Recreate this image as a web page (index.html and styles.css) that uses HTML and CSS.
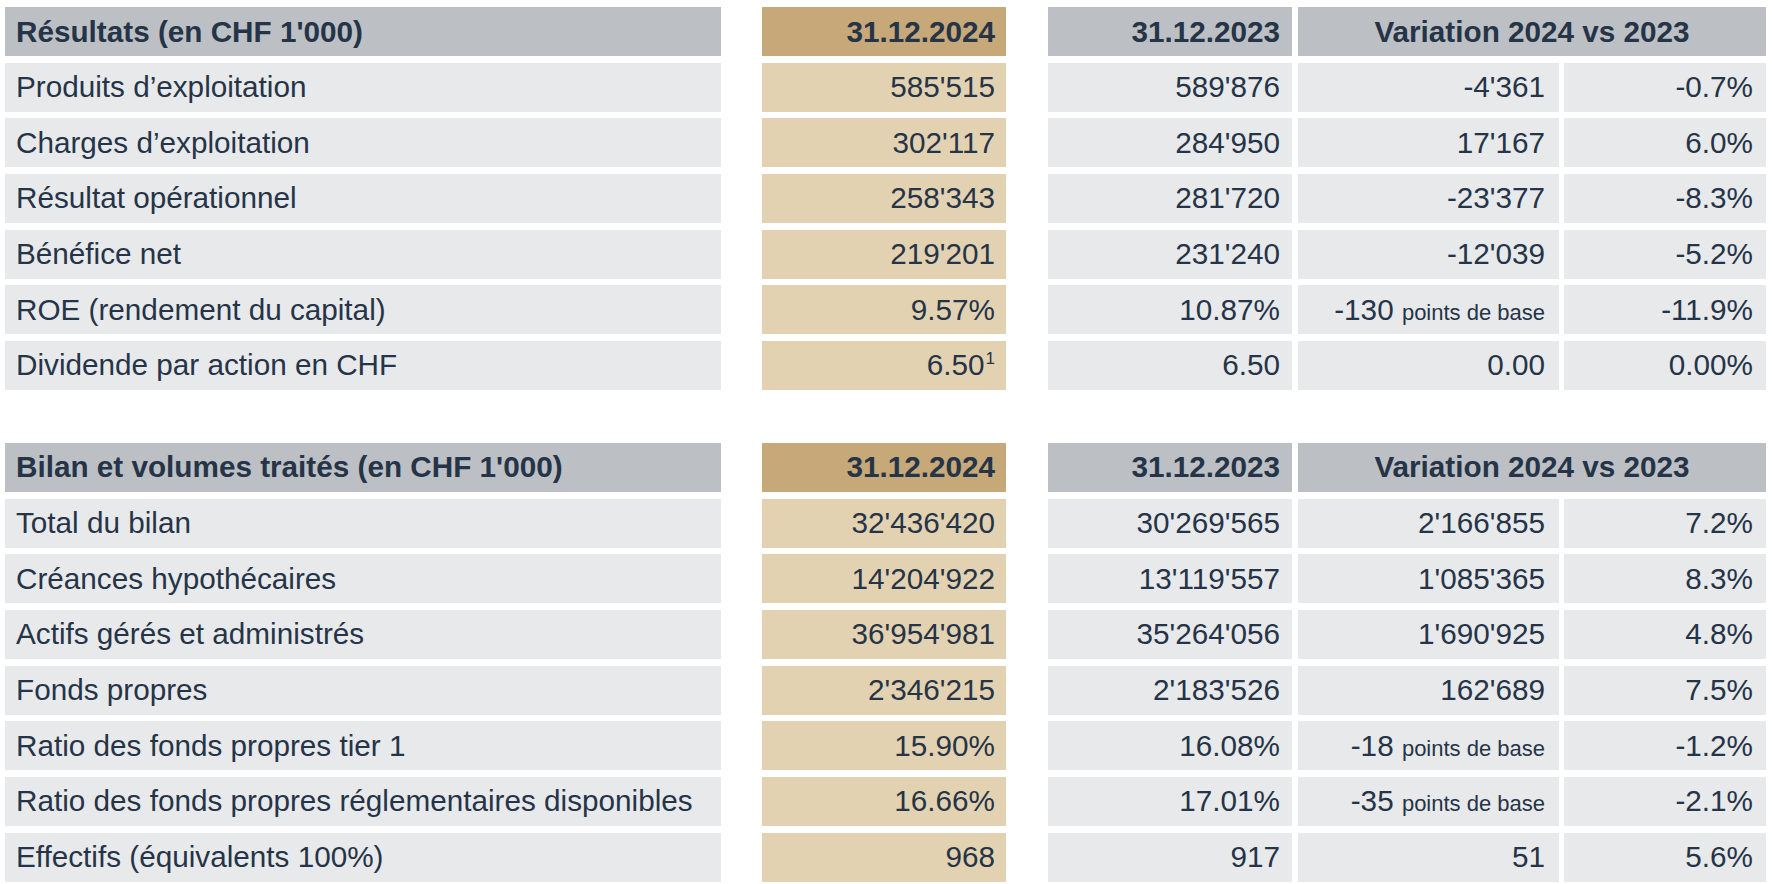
FILE: index.html
```html
<!DOCTYPE html>
<html lang="fr">
<head>
<meta charset="utf-8">
<title>Chiffres clés</title>
<link rel="stylesheet" href="styles.css">
</head>
<body>
<div class="page">
  <section class="table">
    <div class="row head">
      <div class="cell label">Résultats (en CHF 1'000)</div>
      <div class="cell num gold">31.12.2024</div>
      <div class="cell num prev">31.12.2023</div>
      <div class="cell var">Variation 2024 vs 2023</div>
    </div>
    <div class="row">
      <div class="cell label">Produits d’exploitation</div>
      <div class="cell num gold">585'515</div>
      <div class="cell num prev">589'876</div>
      <div class="cell num v1">-4'361</div>
      <div class="cell num v2">-0.7%</div>
    </div>
    <div class="row">
      <div class="cell label">Charges d’exploitation</div>
      <div class="cell num gold">302'117</div>
      <div class="cell num prev">284'950</div>
      <div class="cell num v1">17'167</div>
      <div class="cell num v2">6.0%</div>
    </div>
    <div class="row">
      <div class="cell label">Résultat opérationnel</div>
      <div class="cell num gold">258'343</div>
      <div class="cell num prev">281'720</div>
      <div class="cell num v1">-23'377</div>
      <div class="cell num v2">-8.3%</div>
    </div>
    <div class="row">
      <div class="cell label">Bénéfice net</div>
      <div class="cell num gold">219'201</div>
      <div class="cell num prev">231'240</div>
      <div class="cell num v1">-12'039</div>
      <div class="cell num v2">-5.2%</div>
    </div>
    <div class="row">
      <div class="cell label">ROE (rendement du capital)</div>
      <div class="cell num gold">9.57%</div>
      <div class="cell num prev">10.87%</div>
      <div class="cell num v1"><span>-130 <span class="unit">points de base</span></span></div>
      <div class="cell num v2">-11.9%</div>
    </div>
    <div class="row">
      <div class="cell label">Dividende par action en CHF</div>
      <div class="cell num gold"><span>6.50<sup class="note">1</sup></span></div>
      <div class="cell num prev">6.50</div>
      <div class="cell num v1">0.00</div>
      <div class="cell num v2">0.00%</div>
    </div>
  </section>

  <section class="table">
    <div class="row head">
      <div class="cell label">Bilan et volumes traités (en CHF 1'000)</div>
      <div class="cell num gold">31.12.2024</div>
      <div class="cell num prev">31.12.2023</div>
      <div class="cell var">Variation 2024 vs 2023</div>
    </div>
    <div class="row">
      <div class="cell label">Total du bilan</div>
      <div class="cell num gold">32'436'420</div>
      <div class="cell num prev">30'269'565</div>
      <div class="cell num v1">2'166'855</div>
      <div class="cell num v2">7.2%</div>
    </div>
    <div class="row">
      <div class="cell label">Créances hypothécaires</div>
      <div class="cell num gold">14'204'922</div>
      <div class="cell num prev">13'119'557</div>
      <div class="cell num v1">1'085'365</div>
      <div class="cell num v2">8.3%</div>
    </div>
    <div class="row">
      <div class="cell label">Actifs gérés et administrés</div>
      <div class="cell num gold">36'954'981</div>
      <div class="cell num prev">35'264'056</div>
      <div class="cell num v1">1'690'925</div>
      <div class="cell num v2">4.8%</div>
    </div>
    <div class="row">
      <div class="cell label">Fonds propres</div>
      <div class="cell num gold">2'346'215</div>
      <div class="cell num prev">2'183'526</div>
      <div class="cell num v1">162'689</div>
      <div class="cell num v2">7.5%</div>
    </div>
    <div class="row">
      <div class="cell label">Ratio des fonds propres tier 1</div>
      <div class="cell num gold">15.90%</div>
      <div class="cell num prev">16.08%</div>
      <div class="cell num v1"><span>-18 <span class="unit">points de base</span></span></div>
      <div class="cell num v2">-1.2%</div>
    </div>
    <div class="row">
      <div class="cell label">Ratio des fonds propres réglementaires disponibles</div>
      <div class="cell num gold">16.66%</div>
      <div class="cell num prev">17.01%</div>
      <div class="cell num v1"><span>-35 <span class="unit">points de base</span></span></div>
      <div class="cell num v2">-2.1%</div>
    </div>
    <div class="row">
      <div class="cell label">Effectifs (équivalents 100%)</div>
      <div class="cell num gold">968</div>
      <div class="cell num prev">917</div>
      <div class="cell num v1">51</div>
      <div class="cell num v2">5.6%</div>
    </div>
  </section>
</div>
</body>
</html>
```

FILE: styles.css
```css
html, body {
  margin: 0;
  padding: 0;
  background: #ffffff;
}

.page {
  padding: 7px 6px 0 5px;
  display: flex;
  flex-direction: column;
  gap: 53px;
  font-family: "Liberation Sans", Arial, sans-serif;
  font-size: 29.7px;
  color: #253447;
}

.table {
  display: flex;
  flex-direction: column;
  gap: 6.67px;
}

.row {
  display: flex;
  height: 49px;
}

.cell {
  display: flex;
  align-items: center;
  padding: 0 11px;
  box-sizing: border-box;
  white-space: nowrap;
  background: #e8e9eb;
}

.num {
  justify-content: flex-end;
}

.label {
  width: 716px;
  justify-content: flex-start;
}

.gold {
  width: 244px;
  margin-left: 41px;
  background: #e3d2b2;
}

.prev {
  width: 244px;
  margin-left: 42px;
  padding-right: 12px;
}

.v1 {
  width: 261px;
  margin-left: 6px;
  padding-right: 14px;
}

.v2 {
  width: 202px;
  margin-left: 5px;
  padding-right: 13px;
}

.var {
  width: 468px;
  margin-left: 6px;
  justify-content: center;
}

.head .cell {
  background: #bcc0c4;
  font-weight: bold;
}

.head .gold {
  background: #c6a879;
}

.unit {
  font-size: 22px;
}

.note {
  font-size: 17px;
  line-height: 0;
  vertical-align: 11px;
  margin-left: 1px;
}
```
